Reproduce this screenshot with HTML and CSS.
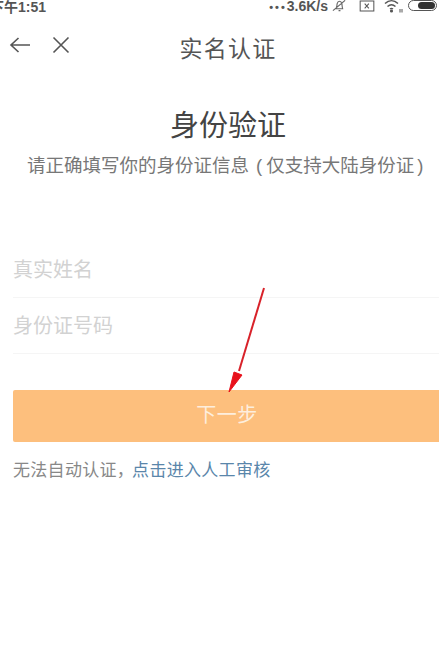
FILE: index.html
```html
<!DOCTYPE html>
<html lang="zh-CN">

<head>
    <meta charset="UTF-8">
    <title>实名认证</title>
    <link rel="stylesheet" href="styles.css">
</head>

<body>
    <div class="status-bar">
        <span class="time">下午1:51</span>
        <div class="status-icons">
            <span class="speed"><span class="dots">•••</span>3.6K/s</span>
            <svg class="bell" width="15" height="15" viewBox="0 0 16 15" fill="none" stroke="#666" stroke-width="1.2">
                <path d="M3 11h9M4.500 11c1-2 .5-3.500 1-5.500C6 3.500 7.500 3 8 3s2 .5 2.500 2.500c.5 2 0 3.500 1 5.500M1 13L14 2M7 13h2"/>
            </svg>
            <svg class="sim" width="16" height="12" viewBox="0 0 16 13" fill="none" stroke="#555" stroke-width="1.100">
                <path d="M.6 1h14.800v11H.6z"/>
                <path d="M5.500 4l4.500 5M10 4L5.500 9"/>
            </svg>
            <svg class="wifi" width="19" height="14" viewBox="0 0 19 14" fill="none" stroke="#555" stroke-width="1.500">
                <path d="M1 4.500c4-3.600 9-3.600 13 0M3.500 7.500c2.500-2.200 5.500-2.200 8 0M6 10c1-.8 2-.8 3 0"/>
                <circle cx="7.500" cy="12" r=".8" fill="#555"/>
                <path d="M16 10v3.500M18 10v3.500" stroke-width="1"/>
            </svg>
            <div class="battery"><div class="battery-level"></div></div>
        </div>
    </div>

    <header class="nav-bar">
        <div class="nav-icons">
            <svg width="22" height="18" viewBox="0 0 22 18" fill="none" stroke="#555" stroke-width="1.600">
                <path d="M21 9H2M9.500 2L2 9l7.500 7"/>
            </svg>
            <svg width="18" height="18" viewBox="0 0 18 18" fill="none" stroke="#555" stroke-width="1.600">
                <path d="M1.500 1.500l15 15M16.500 1.500l-15 15"/>
            </svg>
        </div>
        <h1 class="nav-title">实名认证</h1>
    </header>

    <main class="content">
        <h2 class="heading">身份验证</h2>
        <p class="subheading">请正确填写你的身份证信息<span class="paren">(</span>仅支持大陆身份证<span class="paren-close">)</span></p>

        <form class="form">
            <div class="input-row">真实姓名</div>
            <div class="input-row">身份证号码</div>
            <button type="button" class="next-button">下一步</button>
        </form>

        <p class="manual">无法自动认证，<a class="manual-link">点击进入人工审核</a></p>
    </main>

    <!-- red arrow drawn over the screenshot -->
    <svg class="annotation" width="50" height="112" viewBox="0 0 50 112">
        <path d="M36 1L11 84" stroke="#d8222a" stroke-width="2" fill="none"/>
        <path d="M1 105L6 85L14 88z" fill="#e8111c" stroke="#e8111c" stroke-width="1"/>
    </svg>
</body>

</html>
```

FILE: styles.css
```css
html {
    background: white;
}

body {
    margin: 0;
    width: 439px;
    height: 661px;
    overflow: hidden;
    position: relative;
    background: white;
    font-family: "Liberation Sans", "Noto Sans CJK SC", sans-serif;
}

.status-bar {
    height: 17px;
    display: flex;
    justify-content: space-between;
    align-items: center;
    margin-top: -3px;
    margin-left: -10px;
    color: #555;
    font-size: 14px;
    font-weight: bold;
}

.status-icons {
    display: flex;
    align-items: center;
}

.speed {
    font-size: 14px;
}

.dots {
    font-size: 11px;
    letter-spacing: 2px;
}

.bell {
    margin-left: 4px;
}

.sim {
    margin-left: 12px;
}

.wifi {
    margin-left: 9px;
}

.battery {
    width: 29px;
    height: 11px;
    margin-left: 5px;
    margin-right: 2px;
    border: 1px solid #555;
    border-radius: 6px;
    padding: 1px;
    box-sizing: border-box;
    display: flex;
    justify-content: flex-end;
}

.battery-level {
    width: 17px;
    background: #333;
    border-radius: 4px;
}

.nav-bar {
    height: 64px;
    display: flex;
    align-items: center;
    justify-content: center;
    position: relative;
}

.nav-icons {
    position: absolute;
    left: 9px;
    top: 22px;
    display: flex;
    gap: 21px;
}

.nav-title {
    margin: 0 0 -2px 17px;
    font-size: 23px;
    font-weight: normal;
    color: #555;
    letter-spacing: 1.300px;
}

.content {
    padding-top: 29px;
}

.heading {
    margin: 0 0 0 17px;
    font-size: 29px;
    font-weight: normal;
    color: #444;
    text-align: center;
    line-height: 38px;
}

.subheading {
    margin: 9px 0 0;
    font-size: 18.500px;
    line-height: 24px;
    color: #777;
    white-space: nowrap;
    padding-left: 27px;
}

.paren {
    padding: 0 4px 0 7px;
}

.paren-close {
    padding-left: 3px;
}

.form {
    margin: 64px 0 0 13px;
}

.input-row {
    height: 56px;
    line-height: 56px;
    font-size: 20px;
    color: #d2d2d2;
    border-bottom: 1px solid #f5f5f5;
    box-sizing: border-box;
}

.next-button {
    display: block;
    width: 100%;
    height: 52px;
    margin-top: 36px;
    padding: 0 0 5px 2px;
    border: none;
    border-radius: 2px 0 0 2px;
    background: #fdbf7d;
    color: #fdeedd;
    font: inherit;
    font-size: 20px;
    letter-spacing: .5px;
}

.manual {
    margin: 17px 0 0 13px;
    font-size: 17px;
    letter-spacing: .3px;
    line-height: 24px;
    color: #888;
}

.manual-link {
    margin-left: -2px;
    color: #5a86aa;
}

.annotation {
    position: absolute;
    left: 228px;
    top: 287px;
}
```
